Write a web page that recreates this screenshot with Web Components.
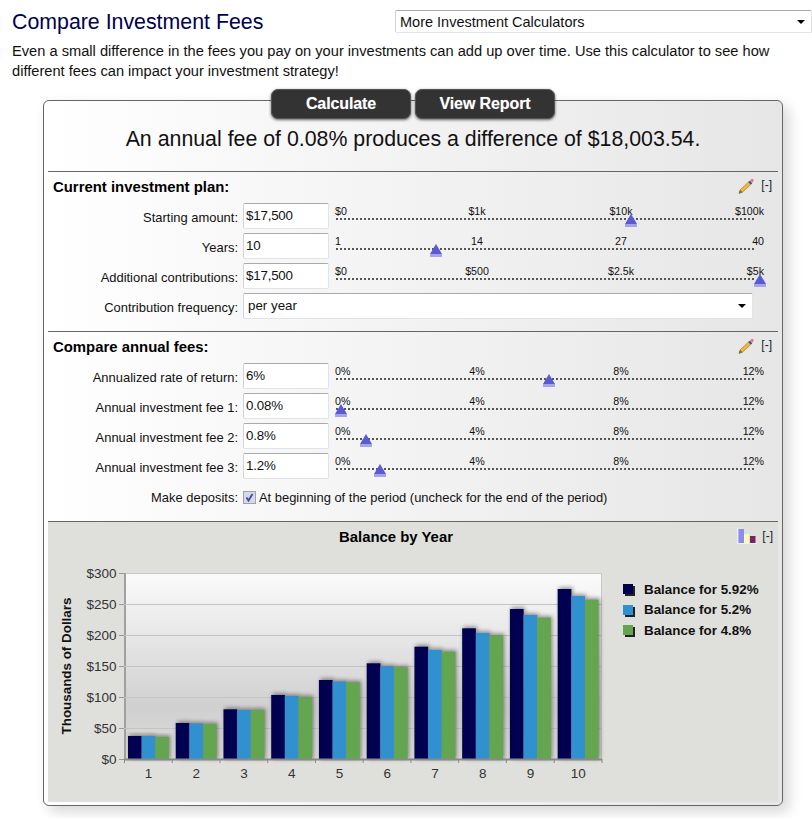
<!DOCTYPE html>
<html>
<head>
<meta charset="utf-8">
<title>Compare Investment Fees</title>
<style>
  html, body { margin: 0; padding: 0; background: #fff; overflow: hidden; }
  body { font-family: "Liberation Sans", Arial, sans-serif; color: #111; }
</style>
</head>
<body>
<fee-page></fee-page>

<script>
const PENCIL = `
  <svg width="16" height="16" viewBox="0 0 16 16">
    <path d="M1 15.5 L2 12 L11 3.6 L13.4 6 L4.5 14.2 Z" fill="#f0b838" stroke="#9c7420" stroke-width=".6"/>
    <path d="M1 15.5 L2 12 L4.5 14.2 Z" fill="#666"/>
    <path d="M10.4 4.2 L11.8 2.8 L14.2 5.2 L12.8 6.6 Z" fill="#3048a8"/>
    <path d="M12 2.6 L13.2 1.2 A1.4 1.4 0 0 1 15.2 3.2 L14.2 5 Z" fill="#f07088"/>
  </svg>`;

const BARS = `
  <svg width="21" height="16" viewBox="0 0 21 16">
    <path d="M.5 0 V15.5 H20" fill="none" stroke="#f0f0f6"/>
    <rect x="1.5" y="1" width="5.5" height="14" fill="#8a8cf0"/>
    <rect x="7" y="6" width="5" height="9" fill="#fbfbb4"/>
    <rect x="13" y="8" width="5.5" height="7" fill="#7c2160"/>
  </svg>`;

class CalcButton extends HTMLElement {
  constructor() {
    super();
    this.attachShadow({ mode: 'open' }).innerHTML = `
      <style>
        :host {
          display: block;
          box-sizing: border-box;
          width: 140px;
          height: 30px;
          line-height: 27px;
          text-align: center;
          background: #333;
          color: #fff;
          font-size: 16px;
          font-weight: bold;
          letter-spacing: -0.1px;
          border: 1px solid #555;
          border-radius: 7px;
          box-shadow: 0 1px 3px rgba(0, 0, 0, 0.6);
          text-shadow: 0 0 1px rgba(255, 255, 255, 0.4);
        }
      </style>
      <slot></slot>`;
  }
}

class CalcSelect extends HTMLElement {
  constructor() {
    super();
    this.attachShadow({ mode: 'open' }).innerHTML = `
      <style>
        :host {
          display: flex;
          box-sizing: border-box;
          align-items: center;
          justify-content: space-between;
          background: #fff;
          border: 1px solid #dfe3ea;
          border-top-color: #aaa;
          border-left-color: #cfd3da;
          border-radius: 2px;
          padding: 0 6px 0 4px;
          font-size: var(--select-size, 14.5px);
          color: #111;
        }
        .text { position: relative; top: var(--select-nudge, 0); }
        .arrow {
          width: 0;
          height: 0;
          border: 4px solid transparent;
          border-top: 4px solid #000;
          border-bottom: 0;
        }
      </style>
      <span class="text"><slot></slot></span>
      <span class="arrow"></span>`;
  }
}

class CalcInput extends HTMLElement {
  constructor() {
    super();
    this.attachShadow({ mode: 'open' }).innerHTML = `
      <style>
        :host {
          display: block;
          box-sizing: border-box;
          flex: none;
          width: 86px;
          height: 26px;
          line-height: 24px;
          padding-left: 2px;
          background: #fff;
          border: 1px solid #dfe3ea;
          border-top-color: #aaa;
          border-left-color: #cfd3da;
          border-radius: 2px;
          font-size: 13.33px;
          letter-spacing: -0.2px;
          color: #111;
        }
      </style>
      <slot></slot>`;
  }
}

class CalcSlider extends HTMLElement {
  constructor() {
    super();
    const ticks = this.getAttribute('ticks').split(',');
    const thumb = this.getAttribute('thumb');
    this.attachShadow({ mode: 'open' }).innerHTML = `
      <style>
        :host {
          display: block;
          position: relative;
          flex: none;
          width: 429px;
          height: 26px;
          font-size: 10.67px;
          color: #111;
        }
        .ticks {
          display: grid;
          grid-template-columns: 80px 124px 164px 61px;
          line-height: 12px;
          padding-top: 2px;
        }
        .ticks span:nth-child(2), .ticks span:nth-child(3) { text-align: center; }
        .ticks span:nth-child(4) { text-align: right; }
        .track {
          margin: 1px 9px 0 1px;
          height: 2px;
          background: repeating-linear-gradient(90deg, #555 0 2px, transparent 2px 4px);
        }
        svg { position: absolute; top: 11px; left: ${thumb - 6}px; }
      </style>
      <div class="ticks">${ticks.map(t => `<span>${t}</span>`).join('')}</div>
      <div class="track"></div>
      <svg width="12" height="14" viewBox="0 0 12 14">
        <path d="M6 0 L12 10 H0 Z" fill="#5a5ad6"/>
        <rect y="10" width="12" height="3" fill="#a5a5e6"/>
      </svg>`;
  }
}

class CalcRow extends HTMLElement {
  constructor() {
    super();
    this.attachShadow({ mode: 'open' }).innerHTML = `
      <style>
        :host {
          display: flex;
          align-items: center;
          height: 26px;
          margin-bottom: 4px;
          font-size: 12.95px;
        }
        .label {
          flex: none;
          width: 190px;
          margin-right: 5px;
          padding-top: 2px;
          text-align: right;
          color: #111;
        }
        ::slotted(calc-slider) { margin-left: 6px; }
      </style>
      <span class="label">${this.getAttribute('label')}</span>
      <slot></slot>`;
  }
}

class CalcSection extends HTMLElement {
  constructor() {
    super();
    this.attachShadow({ mode: 'open' }).innerHTML = `
      <style>
        :host {
          display: block;
          border-top: 1px solid #666;
          padding-bottom: 8px;
        }
        .head {
          display: flex;
          justify-content: space-between;
          box-sizing: border-box;
          height: 31px;
          padding: 6px 6px 0 5px;
        }
        h2 { margin: 0; font-size: 14.9px; line-height: 18px; font-weight: bold; color: #000; }
        .tools { display: flex; align-items: flex-start; gap: 7px; font-size: 12px; line-height: 14px; color: #123; }
      </style>
      <div class="head">
        <h2>${this.getAttribute('heading')}</h2>
        <div class="tools">${PENCIL}<span>[-]</span></div>
      </div>
      <slot></slot>`;
  }
}

class FeeChart extends HTMLElement {
  constructor() {
    super();
    const tops = [
      [736, 736, 737], [723, 723.5, 724], [709.3, 710, 710], [695, 696, 697], [680, 681.5, 682.3],
      [663.3, 666.3, 667.3], [646.7, 650, 651.7], [628.3, 633, 635.3], [609, 615, 617.7], [589, 596, 599.7]
    ];
    const colors = ['#000050', '#3090d0', '#64a650'];
    // svg origin sits at page x 48, y 560
    const ox = 48, oy = 560;
    let bars = '';
    tops.forEach((group, i) => {
      group.forEach((top, j) => {
        const x = 128 + 47.74 * i + 13.6 * j - ox;
        const y = top - oy;
        bars += `<rect x="${x + 1.5}" y="${y - 1.5}" width="13.6" height="${759 - top + 1.5}" fill="#000" opacity=".42" filter="url(#soft)"/>`;
      });
    });
    tops.forEach((group, i) => {
      group.forEach((top, j) => {
        const x = 128 + 47.74 * i + 13.6 * j - ox;
        bars += `<rect x="${x}" y="${top - oy}" width="13.7" height="${759 - top}" fill="${colors[j]}"/>`;
      });
    });

    let grid = '';
    let yLabels = '';
    ['$300', '$250', '$200', '$150', '$100', '$50', '$0'].forEach((t, i) => {
      const y = 573 + 31 * i - oy;
      if (i > 0 && i < 6) grid += `<line x1="76" x2="554" y1="${y + .5}" y2="${y + .5}" stroke="#c4c4c4"/>`;
      grid += `<line x1="71" x2="76" y1="${y + .5}" y2="${y + .5}" stroke="#999"/>`;
      yLabels += `<text x="68.5" y="${y + 5}" text-anchor="end">${t}</text>`;
    });

    let xLabels = '';
    let xTicks = '';
    for (let i = 0; i < 10; i++) {
      xLabels += `<text x="${100.5 + 47.74 * i}" y="218" text-anchor="middle">${i + 1}</text>`;
      xTicks += `<line x1="${76.5 + 47.74 * i}" x2="${76.5 + 47.74 * i}" y1="199" y2="203" stroke="#888"/>`;
    }
    xTicks += `<line x1="554" x2="554" y1="199" y2="203" stroke="#888"/>`;

    this.attachShadow({ mode: 'open' }).innerHTML = `
      <style>
        :host {
          display: block;
          height: 280px;
          background: #dfe0dc;
          border-top: 1px solid #666;
        }
        .head {
          display: flex;
          align-items: center;
          justify-content: center;
          position: relative;
          box-sizing: border-box;
          height: 30px;
          padding-right: 34px;
          font-size: 14.9px;
          font-weight: bold;
          color: #000;
        }
        .tools {
          position: absolute;
          right: 5px;
          top: 6px;
          display: flex;
          align-items: center;
          gap: 4px;
          font-size: 12px;
          font-weight: normal;
          color: #123;
        }
        .body { display: flex; margin-top: 8px; }
        svg.plot { display: block; flex: none; font-family: "Liberation Sans", Arial, sans-serif; }
        .ytext, .xtext { font-size: 13.5px; fill: #333; }
        .axis { font-size: 13.4px; font-weight: bold; fill: #111; }
        ul {
          list-style: none;
          margin: 19px 0 0 10px;
          padding: 0;
          font-size: 13.4px;
          font-weight: bold;
          color: #111;
        }
        li { display: flex; align-items: center; height: 20.5px; }
        i {
          width: 10px;
          height: 10px;
          margin-right: 11px;
          box-shadow: 2px 2px 0 #222;
        }
      </style>
      <div class="head">
        Balance by Year
        <div class="tools">${BARS}<span>[-]</span></div>
      </div>
      <div class="body">
        <svg class="plot" width="565" height="230" viewBox="0 0 565 230">
          <defs>
            <linearGradient id="plotbg" x1="0" y1="0" x2="0" y2="1">
              <stop offset="0" stop-color="#fbfbfb"/>
              <stop offset=".72" stop-color="#d0d0d0"/>
              <stop offset="1" stop-color="#dcdcda"/>
            </linearGradient>
            <filter id="soft" x="-40%" y="-10%" width="180%" height="120%">
              <feGaussianBlur stdDeviation="2"/>
            </filter>
          </defs>
          <rect x="76.5" y="13.5" width="477" height="185.5" fill="url(#plotbg)" stroke="#c8c8c8"/>
          <line x1="77" x2="77" y1="13" y2="199" stroke="#a0a0a0" stroke-width="2"/>
          ${grid}
          ${bars}
          <line x1="76" x2="554" y1="199.5" y2="199.5" stroke="#8a8a8a" stroke-width="2"/>
          ${xTicks}
          <g class="ytext">${yLabels}</g>
          <g class="xtext">${xLabels}</g>
          <text class="axis" transform="translate(23 106) rotate(-90)" text-anchor="middle">Thousands of Dollars</text>
        </svg>
        <ul>
          <li><i style="background:#000050"></i>Balance for 5.92%</li>
          <li><i style="background:#3090d0"></i>Balance for 5.2%</li>
          <li><i style="background:#64a650"></i>Balance for 4.8%</li>
        </ul>
      </div>`;
  }
}

class CalcPanel extends HTMLElement {
  constructor() {
    super();
    this.attachShadow({ mode: 'open' }).innerHTML = `
      <style>
        :host {
          display: block;
          box-sizing: border-box;
          width: 740px;
          margin-left: 43px;
          padding: 0 4px 3px;
          border: 1px solid #666;
          border-radius: 6px;
          background: linear-gradient(90deg, #fff 0, #e6e6e6 100%);
          box-shadow: 6px 6px 14px rgba(0, 0, 0, 0.16);
        }
        .buttons {
          display: flex;
          justify-content: center;
          gap: 4px;
          margin-top: -12px;
        }
        h3 {
          margin: 0;
          padding-bottom: 12px;
          line-height: 40px;
          text-align: center;
          font-size: 21.33px;
          font-weight: normal;
          color: #111;
        }
      </style>
      <div class="buttons"><slot name="actions"></slot></div>
      <h3><slot name="result"></slot></h3>
      <slot></slot>`;
  }
}

class CheckRow extends HTMLElement {
  constructor() {
    super();
    this.attachShadow({ mode: 'open' }).innerHTML = `
      <style>
        :host { display: flex; align-items: center; height: 26px; margin-bottom: 4px; padding-top: 2px; box-sizing: border-box; font-size: 12.93px; color: #111; }
        .label { width: 190px; margin-right: 5px; text-align: right; }
        svg { flex: none; margin-right: 3px; }
      </style>
      <span class="label">${this.getAttribute('label')}</span>
      <svg width="13" height="13" viewBox="0 0 13 13">
        <rect x=".5" y=".5" width="12" height="12" fill="#d6d9e6" stroke="#a0a2ac"/>
        <path d="M3.5 6.5 L5.5 9.5 L9.5 3" fill="none" stroke="#3a4ca8" stroke-width="1.8"/>
      </svg>
      <slot></slot>`;
  }
}

class FeePage extends HTMLElement {
  constructor() {
    super();
    const money = ['$0', '$1k', '$10k', '$100k'].join(',');
    const pct = '0%,4%,8%,12%';
    this.attachShadow({ mode: 'open' }).innerHTML = `
      <style>
        :host { display: block; height: 818px; overflow: hidden; }
        .top { display: flex; padding: 10px 0 0 12px; height: 23px; }
        h1 {
          margin: 0;
          flex: none;
          width: 383px;
          line-height: 24px;
          font-size: 21.33px;
          font-weight: normal;
          color: #000050;
        }
        .top calc-select { flex: 1; height: 23px; }
        .freq { width: 510px; height: 26px; --select-size: 13.33px; --select-nudge: -1px; }
        p {
          margin: 8px 0 0;
          padding: 0 12px;
          height: 59px;
          line-height: 20px;
          font-size: 14.65px;
          color: #111;
        }
      </style>
      <div class="top">
        <h1>Compare Investment Fees</h1>
        <calc-select>More Investment Calculators</calc-select>
      </div>
      <p>Even a small difference in the fees you pay on your investments can add up over time. Use this calculator to see how different fees can impact your investment strategy!</p>
      <calc-panel>
        <calc-button slot="actions">Calculate</calc-button>
        <calc-button slot="actions">View Report</calc-button>
        <span slot="result">An annual fee of 0.08% produces a difference of $18,003.54.</span>
        <calc-section heading="Current investment plan:">
          <calc-row label="Starting amount:"><calc-input>$17,500</calc-input><calc-slider ticks="${money}" thumb="296"></calc-slider></calc-row>
          <calc-row label="Years:"><calc-input>10</calc-input><calc-slider ticks="1,14,27,40" thumb="101"></calc-slider></calc-row>
          <calc-row label="Additional contributions:"><calc-input>$17,500</calc-input><calc-slider ticks="$0,$500,$2.5k,$5k" thumb="425"></calc-slider></calc-row>
          <calc-row label="Contribution frequency:"><calc-select class="freq">per year</calc-select></calc-row>
        </calc-section>
        <calc-section heading="Compare annual fees:">
          <calc-row label="Annualized rate of return:"><calc-input>6%</calc-input><calc-slider ticks="${pct}" thumb="214"></calc-slider></calc-row>
          <calc-row label="Annual investment fee 1:"><calc-input>0.08%</calc-input><calc-slider ticks="${pct}" thumb="6"></calc-slider></calc-row>
          <calc-row label="Annual investment fee 2:"><calc-input>0.8%</calc-input><calc-slider ticks="${pct}" thumb="31"></calc-slider></calc-row>
          <calc-row label="Annual investment fee 3:"><calc-input>1.2%</calc-input><calc-slider ticks="${pct}" thumb="45"></calc-slider></calc-row>
          <check-row label="Make deposits:">At beginning of the period (uncheck for the end of the period)</check-row>
        </calc-section>
        <fee-chart></fee-chart>
      </calc-panel>`;
  }
}

customElements.define('calc-button', CalcButton);
customElements.define('calc-select', CalcSelect);
customElements.define('calc-input', CalcInput);
customElements.define('calc-slider', CalcSlider);
customElements.define('calc-row', CalcRow);
customElements.define('calc-section', CalcSection);
customElements.define('check-row', CheckRow);
customElements.define('fee-chart', FeeChart);
customElements.define('calc-panel', CalcPanel);
customElements.define('fee-page', FeePage);
</script>
</body>
</html>
